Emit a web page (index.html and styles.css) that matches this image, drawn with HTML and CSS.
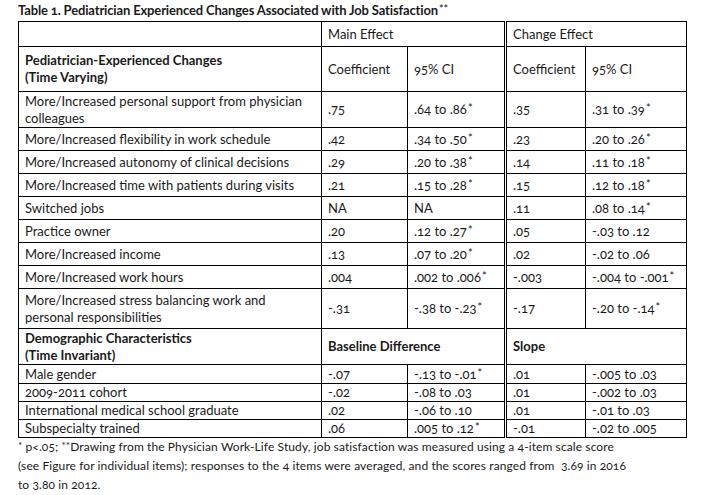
FILE: index.html
```html
<!DOCTYPE html>
<html>
<head>
<meta charset="utf-8">
<link rel="stylesheet" href="styles.css">
</head>
<body>
<div class="page">
  <h1 class="title">Table 1. Pediatrician Experienced Changes Associated with Job Satisfaction<sup class="ast">**</sup></h1>
  <table class="tbl">
    <colgroup>
      <col class="c-label">
      <col class="c-coef">
      <col class="c-ci">
      <col class="c-coef2">
      <col class="c-ci2">
    </colgroup>
    <tr class="r-head">
      <td></td>
      <td colspan="2">Main Effect</td>
      <td colspan="2" class="split">Change Effect</td>
    </tr>
    <tr class="r-sec">
      <td class="b">Pediatrician-Experienced Changes<br>(Time Varying)</td>
      <td>Coefficient</td>
      <td>95% CI</td>
      <td class="split">Coefficient</td>
      <td>95% CI</td>
    </tr>
    <tr class="r-two">
      <td>More/Increased personal support from physician<br>colleagues</td>
      <td>.75</td><td>.64 to .86<sup>*</sup></td>
      <td class="split">.35</td><td>.31 to .39<sup>*</sup></td>
    </tr>
    <tr class="r-one">
      <td>More/Increased flexibility in work schedule</td>
      <td>.42</td><td>.34 to .50<sup>*</sup></td>
      <td class="split">.23</td><td>.20 to .26<sup>*</sup></td>
    </tr>
    <tr class="r-one">
      <td>More/Increased autonomy of clinical decisions</td>
      <td>.29</td><td>.20 to .38<sup>*</sup></td>
      <td class="split">.14</td><td>.11 to .18<sup>*</sup></td>
    </tr>
    <tr class="r-one">
      <td>More/Increased time with patients during visits</td>
      <td>.21</td><td>.15 to .28<sup>*</sup></td>
      <td class="split">.15</td><td>.12 to .18<sup>*</sup></td>
    </tr>
    <tr class="r-one">
      <td>Switched jobs</td>
      <td>NA</td><td>NA</td>
      <td class="split">.11</td><td>.08 to .14<sup>*</sup></td>
    </tr>
    <tr class="r-one">
      <td>Practice owner</td>
      <td>.20</td><td>.12 to .27<sup>*</sup></td>
      <td class="split">.05</td><td>-.03 to .12</td>
    </tr>
    <tr class="r-one">
      <td>More/Increased income</td>
      <td>.13</td><td>.07 to .20<sup>*</sup></td>
      <td class="split">.02</td><td>-.02 to .06</td>
    </tr>
    <tr class="r-one">
      <td>More/Increased work hours</td>
      <td>.004</td><td>.002 to .006<sup>*</sup></td>
      <td class="split">-.003</td><td>-.004 to -.001<sup>*</sup></td>
    </tr>
    <tr class="r-two r-stress">
      <td>More/Increased stress balancing work and<br>personal responsibilities</td>
      <td>-.31</td><td>-.38 to -.23<sup>*</sup></td>
      <td class="split">-.17</td><td>-.20 to -.14<sup>*</sup></td>
    </tr>
    <tr class="r-two">
      <td class="b">Demographic Characteristics<br>(Time Invariant)</td>
      <td colspan="2" class="b">Baseline Difference</td>
      <td colspan="2" class="b split">Slope</td>
    </tr>
    <tr class="r-sm r-male">
      <td>Male gender</td>
      <td>-.07</td><td>-.13 to -.01<sup>*</sup></td>
      <td class="split">.01</td><td>-.005 to .03</td>
    </tr>
    <tr class="r-sm">
      <td>2009-2011 cohort</td>
      <td>-.02</td><td>-.08 to .03</td>
      <td class="split">.01</td><td>-.002 to .03</td>
    </tr>
    <tr class="r-sm">
      <td>International medical school graduate</td>
      <td>.02</td><td>-.06 to .10</td>
      <td class="split">.01</td><td>-.01 to .03</td>
    </tr>
    <tr class="r-sm">
      <td>Subspecialty trained</td>
      <td>.06</td><td>.005 to .12<sup>*</sup></td>
      <td class="split">-.01</td><td>-.02 to .005</td>
    </tr>
  </table>
  <p class="note"><sup>*</sup> p&lt;.05; <sup>**</sup>Drawing from the Physician Work-Life Study, job satisfaction was measured using a 4-item scale score<br>(see Figure for individual items); responses to the 4 items were averaged, and the scores ranged from&nbsp; 3.69 in 2016<br>to 3.80 in 2012.</p>
</div>
</body>
</html>
```

FILE: styles.css
```css
html, body {
  margin: 0;
  padding: 0;
  background: #fff;
}
body {
  font-family: Lato, "Open Sans", sans-serif;
  font-variant-numeric: oldstyle-nums;
  color: #1a1a1a;
  font-size: 13px;
}
.page {
  padding: 3px 0 0 18px;
  width: 668px;
}
.title {
  font-size: 13px;
  font-weight: 700;
  margin: 0 0 3px 0;
  line-height: 15px;
  letter-spacing: -0.15px;
}
sup {
  font-size: 11px;
  font-weight: 400;
  vertical-align: baseline;
  position: relative;
  top: -2px;
  line-height: 0;
  margin-left: 1px;
}
.tbl {
  border-collapse: collapse;
  width: 668px;
  table-layout: fixed;
}
.c-label { width: 303px; }
.c-coef { width: 86px; }
.c-ci { width: 98px; }
.c-coef2 { width: 80px; }
.c-ci2 { width: 101px; }
.tbl td {
  border: 1px solid #000;
  padding: 0 6px;
  line-height: 17px;
  vertical-align: middle;
  white-space: nowrap;
}
.tbl td.split {
  border-left: 3px double #000;
}
.tbl td.b {
  font-weight: 700;
}
.r-head td { height: 24px; }
.r-sec td { height: 44px; }
.r-two td { height: 35px; }
.r-stress td { height: 39px; }
.r-one td { height: 22px; }
.r-sm td { height: 17px; }
.r-male td { height: 18px; }
.note {
  margin: -1px 0 0 0;
  line-height: 19px;
  font-size: 12px;
  white-space: nowrap;
  letter-spacing: 0.1px;
}
.note sup {
  margin-left: 0;
  font-size: 10px;
}
```
